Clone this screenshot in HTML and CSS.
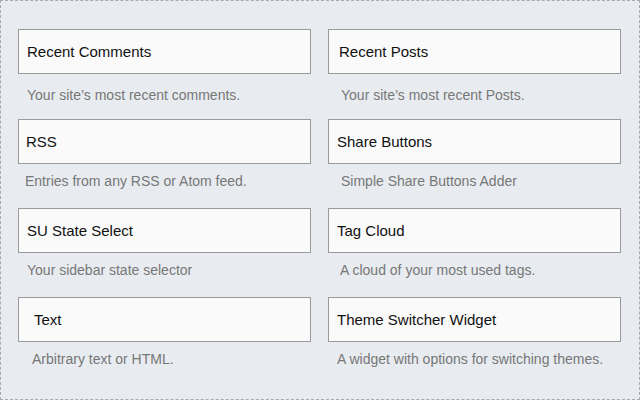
FILE: index.html
```html
<!DOCTYPE html>
<html lang="en">
<head>
<meta charset="utf-8">
<title>Available Widgets</title>
<link rel="stylesheet" href="styles.css">
</head>
<body>
<div class="panel">
  <div class="grid">
    <div class="widget">
      <div class="widget-title">Recent Comments</div>
      <p class="widget-desc first">Your site’s most recent comments.</p>
    </div>
    <div class="widget">
      <div class="widget-title in-10">Recent Posts</div>
      <p class="widget-desc first in-13">Your site’s most recent Posts.</p>
    </div>
    <div class="widget">
      <div class="widget-title in-7">RSS</div>
      <p class="widget-desc in-7">Entries from any RSS or Atom feed.</p>
    </div>
    <div class="widget">
      <div class="widget-title">Share Buttons</div>
      <p class="widget-desc in-13">Simple Share Buttons Adder</p>
    </div>
    <div class="widget">
      <div class="widget-title">SU State Select</div>
      <p class="widget-desc">Your sidebar state selector</p>
    </div>
    <div class="widget">
      <div class="widget-title">Tag Cloud</div>
      <p class="widget-desc in-12">A cloud of your most used tags.</p>
    </div>
    <div class="widget">
      <div class="widget-title in-15">Text</div>
      <p class="widget-desc in-14">Arbitrary text or HTML.</p>
    </div>
    <div class="widget">
      <div class="widget-title">Theme Switcher Widget</div>
      <p class="widget-desc">A widget with options for switching themes.</p>
    </div>
  </div>
</div>
</body>
</html>
```
FILE: styles.css
```css
html, body {
  margin: 0;
  padding: 0;
}

body {
  font-family: "Liberation Sans", Arial, sans-serif;
  background: #e8ecf0;
}

.panel {
  width: 640px;
  height: 400px;
  box-sizing: border-box;
  border: 1px dashed #a9a9a9;
  background: #e8ecf0;
  padding: 28px 0 0 17px;
}

.grid {
  display: grid;
  grid-template-columns: 293px 293px;
  grid-template-rows: 90px 89px 89px 89px;
  column-gap: 17px;
}

.widget {
  display: flex;
  flex-direction: column;
}

.widget-title {
  height: 45px;
  box-sizing: border-box;
  border: 1px solid #9a9a9a;
  background: #fafafa;
  padding-left: 8px;
  font-size: 15px;
  line-height: 43px;
  color: #111;
  white-space: nowrap;
}

.widget-desc {
  margin: 9px 0 0;
  padding-left: 9px;
  font-size: 14px;
  line-height: 17px;
  color: #777;
  white-space: nowrap;
}

.widget-desc.first {
  margin-top: 13px;
}

.in-7 { padding-left: 7px; }
.in-10 { padding-left: 10px; }
.in-12 { padding-left: 12px; }
.in-13 { padding-left: 13px; }
.in-14 { padding-left: 14px; }
.in-15 { padding-left: 15px; }
```
